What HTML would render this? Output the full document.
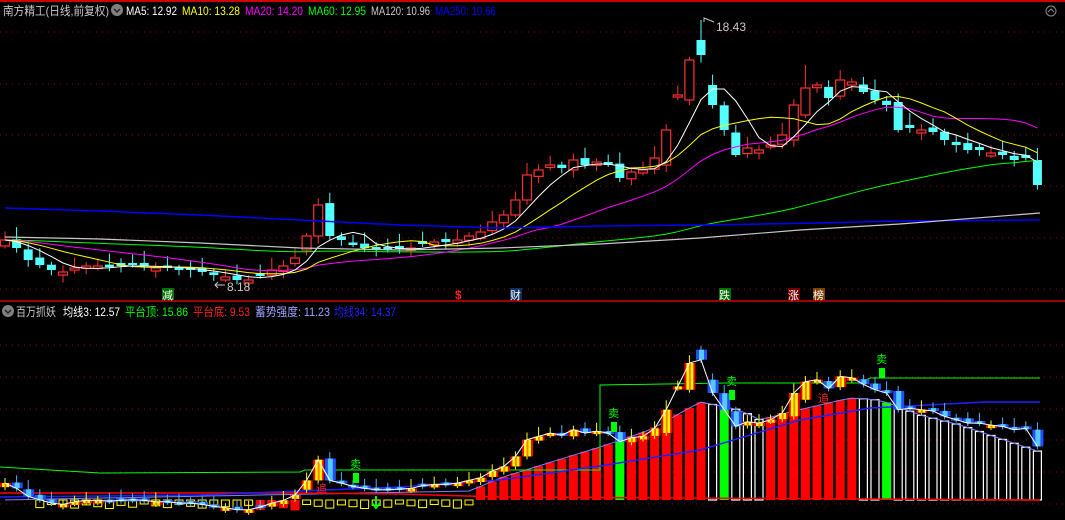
<!DOCTYPE html>
<html><head><meta charset="utf-8">
<style>
html,body{margin:0;padding:0;background:#000;width:1065px;height:520px;overflow:hidden}
svg{display:block}
text{font-family:"Liberation Sans","Noto Sans CJK SC",sans-serif}
</style></head><body>
<svg id="s" width="1065" height="520" xmlns="http://www.w3.org/2000/svg">
<rect width="1065" height="520" fill="#000"/>
<line x1="0" y1="1" x2="1065" y2="1" stroke="#d00000" stroke-width="2"/>
<line x1="0" y1="301" x2="1065" y2="301" stroke="#d00000" stroke-width="1.5"/>
<g id="grid"></g>
<g id="top"></g>
<g id="bot"></g>
<g font-size="12" lengthAdjust="spacingAndGlyphs">
<text x="3" y="15" fill="#c8c8c8" textLength="106" lengthAdjust="spacingAndGlyphs">南方精工(日线,前复权)</text>
<text x="126" y="15" fill="#fff" textLength="51" lengthAdjust="spacingAndGlyphs">MA5: 12.92</text>
<text x="182" y="15" fill="#ffff00" textLength="58" lengthAdjust="spacingAndGlyphs">MA10: 13.28</text>
<text x="245" y="15" fill="#ff00ff" textLength="58" lengthAdjust="spacingAndGlyphs">MA20: 14.20</text>
<text x="308" y="15" fill="#00ff00" textLength="58" lengthAdjust="spacingAndGlyphs">MA60: 12.95</text>
<text x="371" y="15" fill="#c8c8c8" textLength="59" lengthAdjust="spacingAndGlyphs">MA120: 10.96</text>
<text x="435" y="15" fill="#0000ff" textLength="61" lengthAdjust="spacingAndGlyphs">MA250: 10.66</text>
<text x="16" y="316" fill="#c8c8c8" textLength="40" lengthAdjust="spacingAndGlyphs">百万抓妖</text>
<text x="63" y="316" fill="#fff" textLength="57" lengthAdjust="spacingAndGlyphs">均线3: 12.57</text>
<text x="125" y="316" fill="#00ff00" textLength="63" lengthAdjust="spacingAndGlyphs">平台顶: 15.86</text>
<text x="193" y="316" fill="#ff2020" textLength="57" lengthAdjust="spacingAndGlyphs">平台底: 9.53</text>
<text x="255" y="316" fill="#a0a0ff" textLength="75" lengthAdjust="spacingAndGlyphs">蓄势强度: 11.23</text>
<text x="334" y="316" fill="#2020ff" textLength="62" lengthAdjust="spacingAndGlyphs">均线34: 14.37</text>
</g>
<circle cx="117" cy="10" r="6" fill="#808080"/><path d="M114 9 L117 12 L120 9" stroke="#222" stroke-width="1.5" fill="none"/>
<circle cx="1051" cy="11" r="5" fill="none" stroke="#888"/><path d="M1048 12 L1051 9 L1054 12" stroke="#888" fill="none"/>
<text x="716" y="31" font-size="12" fill="#c8c8c8">18.43</text>
<path d="M704 22 L704 18 L714 22" stroke="#c8c8c8" fill="none"/>
<text x="227" y="291" font-size="12" fill="#c8c8c8">8.18</text>
<path d="M215 285 L225 285 M218 282 L215 285 L218 288" stroke="#c8c8c8" fill="none"/>
<rect x="162" y="288" width="12" height="12" fill="#007000"/><text x="162" y="299" font-size="11" fill="#fff">减</text>
<text x="455" y="299" font-size="12" fill="#ff2020" font-weight="bold">$</text>
<rect x="510" y="288" width="12" height="12" fill="#103060"/><text x="510" y="299" font-size="11" fill="#fff">财</text>
<rect x="719" y="288" width="12" height="12" fill="#007000"/><text x="719" y="299" font-size="11" fill="#fff">跌</text>
<rect x="788" y="288" width="12" height="12" fill="#700000"/><text x="788" y="299" font-size="11" fill="#fff">涨</text>
<rect x="813" y="288" width="12" height="12" fill="#804000"/><text x="813" y="299" font-size="11" fill="#fff">榜</text>
<circle cx="8" cy="311" r="6" fill="#808080"/><path d="M5 310 L8 313 L11 310" stroke="#222" stroke-width="1.5" fill="none"/>
</svg>
<script>
var C=[240,248,260,265,270,272,268,266,266,267,266,265,266,268,268,270,270,272,275,277,280,280,276,270,266,258,236,205,236,240,245,248,250,250,249,248,244,242,242,240,236,232,222,215,200,175,170,165,168,160,165,162,165,178,172,170,158,130,95,60,55,105,130,155,148,150,145,135,105,88,85,98,80,82,92,100,105,130,128,130,132,140,145,150,150,153,155,160,158,185];
var N=C.length;
function X(i){return 5+i*11.6}
function F(v){return Number(v).toFixed(1)}
function R(i,k){return ((i*37+k*17+5)%11)/11}
var gr='';
[32,84,135,186,238,289,345,377,409,440,472,504].forEach(function(y){gr+='<line x1="0" y1="'+y+'" x2="1065" y2="'+y+'" stroke="#a00000" stroke-dasharray="1 5"/>'});
document.getElementById('grid').innerHTML=gr;
function ma(n){var r=[];for(var i=0;i<N;i++){var s=0;for(var k=0;k<n;k++){var j=i-k;s+=C[j<0?0:j]}r.push(s/n)}return r}
function pl(a,col,f){var p=a.map(function(v,i){return F(X(i))+','+F(f?f(v):v)}).join(' ');return '<polyline points="'+p+'" fill="none" stroke="'+col+'" stroke-width="1"/>'}
var O=[];
for(var i=0;i<N;i++){var o=(i>0)?C[i-1]+(R(i,1)-0.5)*6:C[i]+6;if(Math.abs(o-C[i])<2)o=C[i]+(i%2?3:-3);O.push(o)}
O[27]=236;O[26]=250;O[58]=97;O[59]=100;O[60]=40;O[61]=85;O[89]=160;O[45]=200;O[57]=165;O[44]=215;O[68]=140;O[69]=115;
var g='';
for(var i=0;i<N;i++){
 var x=X(i),o=O[i],c=C[i],tp=Math.min(o,c),bt=Math.max(o,c),up=c<o;
 var hi=tp-3-R(i,2)*10,lo=bt+2+R(i,3)*6; if(i==60)hi=20; if(i==69)hi=65;if(i==72)hi=70;
 var col=up?'#ff3030':'#54ffff';
 g+='<line x1="'+F(x)+'" y1="'+F(hi)+'" x2="'+F(x)+'" y2="'+F(lo)+'" stroke="'+col+'"/>';
 if(up)g+='<rect x="'+F(x-4.5)+'" y="'+F(tp)+'" width="9" height="'+F(Math.max(bt-tp,1))+'" fill="#000" stroke="'+col+'" stroke-width="1.2"/>';
 else g+='<rect x="'+F(x-4.5)+'" y="'+F(tp)+'" width="9" height="'+F(Math.max(bt-tp,1.5))+'" fill="'+col+'"/>';
}
g+=pl(ma(60),'#00ff00');g+=pl(ma(20),'#ff00ff');g+=pl(ma(10),'#ffff00');g+=pl(ma(5),'#ffffff');
g+='<polyline points="5,208 100,211 200,215 300,220 400,225 500,228 600,226 700,225 820,223 900,221 1040,220" fill="none" stroke="#0000ff" stroke-width="1.5"/>';
g+='<polyline points="5,237 100,239 200,243 300,248 400,250 500,248 600,244 700,238 800,230 900,224 1040,213" fill="none" stroke="#c8c8c8" stroke-width="1.2"/>';
document.getElementById('top').innerHTML=g;
function B(y){return 323+0.667*y}
var P=[[0,500],[470,491],[500,478],[600,447],[650,430],[700,402],[740,410],[760,420],[790,412],[850,398],[880,400],[920,415],[960,425],[1040,452]];
function bar(x){for(var k=0;k<P.length-1;k++){if(x<=P[k+1][0]){var t=(x-P[k][0])/(P[k+1][0]-P[k][0]);return P[k][1]+t*(P[k+1][1]-P[k][1])}}return 452}
var greens={53:1,62:1,76:1};
var b='',tops=[];
for(var i=0;i<N;i++){
 var x=X(i),t=bar(x);tops.push(t);
 if(x<470){
  if(x>250&&x<300)b+='<rect x="'+F(x-4.5)+'" y="500" width="9" height="'+F(6+R(i,4)*6)+'" fill="#ff0000"/>';
  else if(x>35)b+='<rect x="'+F(x-4)+'" y="500" width="8" height="'+F(4+R(i,4)*5)+'" fill="none" stroke="#ffff00"/>';
  continue}
 var rising=bar(x)<bar(x-11.6);
 if(greens[i])b+='<rect x="'+F(x-4.5)+'" y="'+F(t)+'" width="9" height="'+F(500-t)+'" fill="#00ff00"/>';
 else if(rising)b+='<rect x="'+F(x-4.5)+'" y="'+F(t)+'" width="9" height="'+F(500-t)+'" fill="#ff0000"/>';
 else b+='<rect x="'+F(x-4)+'" y="'+F(t)+'" width="8" height="'+F(500-t)+'" fill="none" stroke="#fff" stroke-width="1.2"/>';
}
b+=pl(tops,'#8080ff');
b+='<polyline points="0,493 300,493 400,494 500,497 1040,500" fill="none" stroke="#ff0000" stroke-width="1.5"/>';
b+='<polyline points="0,467 100,473 300,472 305,470 600,470 600,385 725,383 860,383 870,378 1040,378" fill="none" stroke="#00ff00"/>';
b+='<polyline points="0,497 200,495 400,487 500,480 600,466 700,450 800,420 870,408 985,402 1040,402" fill="none" stroke="#2020ff" stroke-width="1.5"/>';
for(var i=0;i<N;i++){
 var x=X(i),o=B(O[i]),c=B(C[i]),tp=Math.min(o,c),bt=Math.max(o,c),up=C[i]<O[i],h=Math.max(bt-tp,3);
 b+='<line x1="'+F(x)+'" y1="'+F(tp-4-R(i,5)*6)+'" x2="'+F(x)+'" y2="'+F(bt+3)+'" stroke="'+(up?'#ffff00':'#54b0ff')+'"/>';
 if(up)b+='<rect x="'+F(x-5)+'" y="'+F(tp)+'" width="11" height="'+F(h)+'" fill="#ff0000"/><rect x="'+F(x-3)+'" y="'+F(tp)+'" width="7" height="'+F(h)+'" fill="#ffff00"/><rect x="'+F(x-0.5)+'" y="'+F(tp)+'" width="2" height="'+F(h)+'" fill="#ff8000"/>';
 else b+='<rect x="'+F(x-5)+'" y="'+F(tp)+'" width="11" height="'+F(h)+'" fill="#2050ff"/><rect x="'+F(x-2)+'" y="'+F(tp)+'" width="5" height="'+F(h)+'" fill="#54c8ff"/>';
}
b+=pl(C,'#ffffff',function(v){return B(v)});
[[356,468],[614,417],[732,385],[882,363]].forEach(function(p){b+='<rect x="'+(p[0]-3)+'" y="'+(p[1]+5)+'" width="6" height="10" fill="#00ff00"/><text x="'+(p[0]-6)+'" y="'+p[1]+'" font-size="11" fill="#00ff00">卖</text>'});
b+='<text x="818" y="402" font-size="11" fill="#ff2020">追</text><text x="316" y="492" font-size="11" fill="#ff2020">追</text>';
b+='<path d="M376 496 L376 506 M372 503 L376 508 L380 503" stroke="#00ff00" stroke-width="2" fill="none"/>';
document.getElementById('bot').innerHTML=b;
</script>
</body></html>
